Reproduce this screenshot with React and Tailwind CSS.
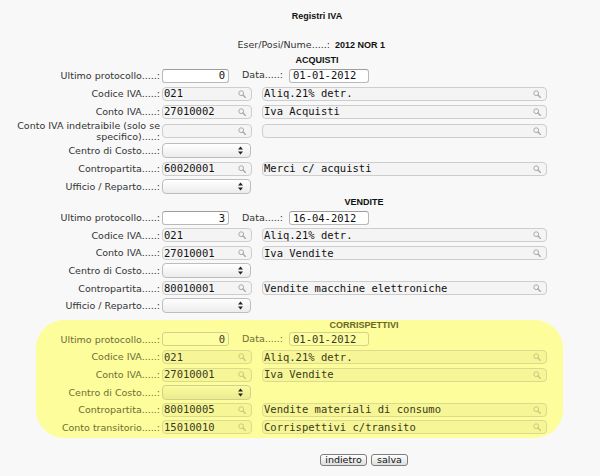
import React from "react";

const SANS = "font-['DejaVu_Sans',sans-serif]";
const MONO = "font-['DejaVu_Sans_Mono',monospace]";
const BOLD = "font-['Liberation_Sans',Arial,sans-serif] font-bold text-[9px]";

function Lens({ yellow }) {
  return (
    <svg width="8" height="8" viewBox="0 0 8 8" className="shrink-0">
      <circle cx="3.2" cy="3.2" r="2.4" fill="none" stroke={yellow ? "#c9c982" : "#a9a9a9"} strokeWidth="1" />
      <line x1="5" y1="5" x2="7.4" y2="7.4" stroke={yellow ? "#c9c982" : "#a9a9a9"} strokeWidth="1.4" strokeLinecap="round" />
    </svg>
  );
}

function Arrows() {
  return (
    <svg width="5" height="9" viewBox="0 0 5 9" className="shrink-0">
      <polygon points="0,3.6 2.5,0.6 5,3.6" fill="#222" />
      <polygon points="0,5.4 2.5,8.4 5,5.4" fill="#222" />
    </svg>
  );
}

function Plain({ value, wide, yellow }) {
  return (
    <div
      className={
        "h-[14px] flex items-center rounded-[3px] border leading-none text-[10.5px] " + MONO + " " +
        (wide ? "w-[80px] pl-[3px] " : "w-[67px] justify-end pr-[3px] ") +
        (yellow ? "bg-[#fdfda2] border-[#d2d28e] text-[#3a3a1c]" : "bg-white border-[#b9b9b9] border-t-[#9c9c9c] text-[#111]")
      }
    >
      {value}
    </div>
  );
}

function Search({ value, wide, yellow }) {
  return (
    <div
      className={
        "h-[14px] flex items-center justify-between rounded-[4px] border pl-[1px] pr-[5px] leading-none text-[10.5px] " + MONO + " " +
        (wide ? "w-[285px] " : "w-[90px] ") +
        (yellow ? "bg-[#f6f697] border-[#dada90] text-[#3a3a1c]" : "bg-[#f4f4f4] border-[#cdcdcd] text-[#111]")
      }
    >
      <span className="whitespace-pre">{value}</span>
      <Lens yellow={yellow} />
    </div>
  );
}

function Select({ yellow }) {
  return (
    <div
      className={
        "h-[15px] w-[89px] flex items-center justify-end rounded-[4px] border pr-[7px] " +
        (yellow
          ? "bg-gradient-to-b from-[#fafaa0] to-[#ecec8e] border-[#d0d08a]"
          : "bg-gradient-to-b from-white to-[#ececec] border-[#bdbdbd]")
      }
    >
      <Arrows />
    </div>
  );
}

function Row({ label, yellow, inset, tall, pitch, children }) {
  return (
    <div
      className={
        "flex items-center " +
        (tall ? "h-[21px] " : pitch === "a" ? "h-[18px] " : "h-[17.6px] ")
      }
    >
      <div
        className={
          "text-right leading-[11px] text-[9.5px] whitespace-nowrap pr-[2px] " + SANS + " " +
          (inset ? "w-[126px] " : "w-[162px] ") +
          (yellow ? "text-[#6e6e34]" : "text-[#333]")
        }
      >
        {label}
      </div>
      <div className="flex items-center">{children}</div>
    </div>
  );
}

function FirstRow({ proto, date, yellow, inset, pitch }) {
  return (
    <Row label="Ultimo protocollo.....:" yellow={yellow} inset={inset} pitch={pitch}>
      <Plain value={proto} yellow={yellow} />
      <div
        className={
          "w-[54px] text-right text-[9.5px] " + SANS + " " + (yellow ? "text-[#6e6e34]" : "text-[#333]")
        }
      >
        Data.....:
      </div>
      <div className="ml-[6px]">
        <Plain value={date} wide yellow={yellow} />
      </div>
    </Row>
  );
}

function Pair({ label, code, desc, yellow, inset, pitch, tall }) {
  return (
    <Row label={label} yellow={yellow} inset={inset} pitch={pitch} tall={tall}>
      <Search value={code} yellow={yellow} />
      <div className="ml-[10px]">
        <Search value={desc} wide yellow={yellow} />
      </div>
    </Row>
  );
}

export default function App() {
  return (
    <div className="w-[600px] h-[476px] bg-[#f8f8f8] overflow-hidden">
      <div className={"pt-[10px] ml-[217px] w-[200px] text-center leading-[12px] text-[#111] " + BOLD + " text-[9.5px]"}>
        Registri IVA
      </div>
      <div className="mt-[17px] flex items-center leading-[12px]">
        <div className={"w-[330px] text-right text-[9.5px] text-[#333] " + SANS}>Eser/Posi/Nume.....:</div>
        <div className={"ml-[5px] text-[#111] " + BOLD}>2012 NOR 1</div>
      </div>
      <div className={"mt-[3px] ml-[217px] w-[200px] text-center leading-[12px] text-[#111] " + BOLD}>ACQUISTI</div>

      <div className="mt-[0.5px]">
        <FirstRow proto="0" date="01-01-2012" pitch="a" />
        <Pair label="Codice IVA.....:" code="021" desc="Aliq.21% detr." pitch="a" />
        <Pair label="Conto IVA.....:" code="27010002" desc="Iva Acquisti" pitch="a" />
        <Pair
          label={<span>Conto IVA indetraibile (solo se<br />specifico).....:</span>}
          code=""
          desc=""
          pitch="a"
          tall
        />
        <Row label="Centro di Costo.....:" pitch="a">
          <Select />
        </Row>
        <Pair label="Contropartita.....:" code="60020001" desc="Merci c/ acquisti" pitch="a" />
        <Row label="Ufficio / Reparto.....:" pitch="a">
          <Select />
        </Row>
      </div>

      <div className={"mt-[0.5px] ml-[264px] w-[200px] text-center leading-[12px] text-[#111] " + BOLD}>VENDITE</div>
      <div className="mt-[1px]">
        <FirstRow proto="3" date="16-04-2012" />
        <Pair label="Codice IVA.....:" code="021" desc="Aliq.21% detr." />
        <Pair label="Conto IVA.....:" code="27010001" desc="Iva Vendite" />
        <Row label="Centro di Costo.....:">
          <Select />
        </Row>
        <Pair label="Contropartita.....:" code="80010001" desc="Vendite macchine elettroniche" />
        <Row label="Ufficio / Reparto.....:">
          <Select />
        </Row>
      </div>

      <div className="mt-[5px] ml-[36px] w-[527px] rounded-[28px] bg-[#fdfd9b] pb-[1.5px]">
        <div className={"ml-[228px] w-[200px] text-center leading-[11px] text-[#67672c] " + BOLD}>CORRISPETTIVI</div>
        <FirstRow proto="0" date="01-01-2012" yellow inset />
        <Pair label="Codice IVA.....:" code="021" desc="Aliq.21% detr." yellow inset />
        <Pair label="Conto IVA.....:" code="27010001" desc="Iva Vendite" yellow inset />
        <Row label="Centro di Costo.....:" yellow inset>
          <Select yellow />
        </Row>
        <Pair label="Contropartita.....:" code="80010005" desc="Vendite materiali di consumo" yellow inset />
        <Pair label="Conto transitorio.....:" code="15010010" desc="Corrispettivi c/transito" yellow inset />
      </div>

      <div className="mt-[16px] ml-[320px] flex gap-[4px]">
        <button className={"h-[12px] w-[47px] flex items-center justify-center rounded-[3px] border border-[#7d7d7d] bg-gradient-to-b from-white to-[#dedede] text-[9.5px] leading-none text-[#111] " + SANS}>
          indietro
        </button>
        <button className={"h-[12px] w-[37px] flex items-center justify-center rounded-[3px] border border-[#7d7d7d] bg-gradient-to-b from-white to-[#dedede] text-[9.5px] leading-none text-[#111] " + SANS}>
          salva
        </button>
      </div>
    </div>
  );
}
